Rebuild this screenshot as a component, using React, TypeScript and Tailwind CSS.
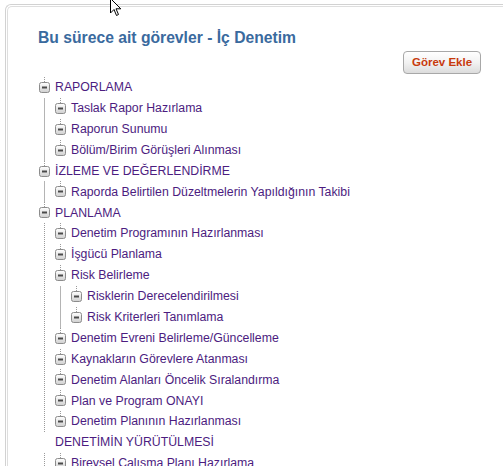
import React from 'react';

type Node = {
  label: string;
  icon?: boolean;
  line?: 'solid' | 'dotted';
  children?: Node[];
};

const tree: Node[] = [
  {
    label: 'RAPORLAMA',
    line: 'solid',
    children: [
      { label: 'Taslak Rapor Hazırlama' },
      { label: 'Raporun Sunumu' },
      { label: 'Bölüm/Birim Görüşleri Alınması' },
    ],
  },
  {
    label: 'İZLEME VE DEĞERLENDİRME',
    line: 'solid',
    children: [{ label: 'Raporda Belirtilen Düzeltmelerin Yapıldığının Takibi' }],
  },
  {
    label: 'PLANLAMA',
    line: 'dotted',
    children: [
      { label: 'Denetim Programının Hazırlanması' },
      { label: 'İşgücü Planlama' },
      {
        label: 'Risk Belirleme',
        line: 'solid',
        children: [
          { label: 'Risklerin Derecelendirilmesi' },
          { label: 'Risk Kriterleri Tanımlama' },
        ],
      },
      { label: 'Denetim Evreni Belirleme/Güncelleme' },
      { label: 'Kaynakların Görevlere Atanması' },
      { label: 'Denetim Alanları Öncelik Sıralandırma' },
      { label: 'Plan ve Program ONAYI' },
      { label: 'Denetim Planının Hazırlanması' },
    ],
  },
  {
    label: 'DENETİMİN YÜRÜTÜLMESİ',
    icon: false,
    line: 'dotted',
    children: [{ label: 'Bireysel Çalışma Planı Hazırlama' }],
  },
];

const MinusIcon = () => (
  <svg width="11" height="11" viewBox="0 0 11 11">
    <defs>
      <linearGradient id="mg" x1="0" y1="0" x2="0" y2="1">
        <stop offset="0" stopColor="#ffffff" />
        <stop offset="1" stopColor="#cfcfcf" />
      </linearGradient>
    </defs>
    <rect x="0.5" y="0.5" width="10" height="10" rx="2" fill="url(#mg)" stroke="#8c8c8c" />
    <rect x="3" y="4.5" width="5" height="2" fill="#4a4a4a" />
  </svg>
);

const TreeNode = ({ node }: { node: Node }) => {
  const hasIcon = node.icon !== false;
  return (
    <li>
      <div className="flex h-[20.9px] items-stretch">
        {hasIcon ? (
          <div className="flex w-[11px] flex-col items-center">
            <div className="h-[5px] w-0 border-l border-dotted border-[#9a9a9a]" />
            <MinusIcon />
          </div>
        ) : (
          <div className="w-[11px]" />
        )}
        <span className="ml-[5px] flex items-center whitespace-nowrap text-[12.3px] text-[#4c1c80]">
          {node.label}
        </span>
      </div>
      {node.children && (
        <ul
          className={
            'ml-[5px] border-l pl-[10px] ' +
            (node.line === 'dotted' ? 'border-dotted border-[#9a9a9a]' : 'border-solid border-[#b4b4b4]')
          }
        >
          {node.children.map((c) => (
            <TreeNode key={c.label} node={c} />
          ))}
        </ul>
      )}
    </li>
  );
};

export default function App() {
  return (
    <div
      className="relative h-[466px] w-[503px] overflow-hidden bg-white"
      style={{ fontFamily: '"Liberation Sans", Arial, sans-serif' }}
    >
      <div className="ml-[5px] mt-[4px] h-[470px] rounded-tl-[6px] border-l border-t border-[#d2d2d2] pl-[1px] pt-[1px]">
        <div className="h-full rounded-tl-[5px] border-l border-t border-[#dedede] pl-[30px] pt-[21px]">
          <h1 className="text-[15.7px] font-bold leading-[20px] text-[#3a6a9e]">
            Bu sürece ait görevler - İç Denetim
          </h1>

          <div className="mt-[3px] flex justify-end pr-[22px]">
            <button className="h-[23px] w-[78px] rounded-[4px] border border-[#a8a8a8] bg-gradient-to-b from-[#ffffff] via-[#f2f2f2] to-[#dcdcdc] text-[11.5px] font-bold text-[#c73a0c]">
              Görev Ekle
            </button>
          </div>

          <ul className="mt-[3px] pl-[1px]">
            {tree.map((n) => (
              <TreeNode key={n.label} node={n} />
            ))}
          </ul>
        </div>
      </div>

      <svg className="absolute left-[110px] top-[-2px]" width="13" height="19" viewBox="0 0 13 19">
        <path d="M0.5 0.5 L0.5 15 L4 11.5 L6.5 17.5 L8.5 16.5 L6 10.8 L10.8 10.8 Z" fill="#fff" stroke="#000" strokeWidth="1" strokeLinejoin="miter" />
      </svg>
    </div>
  );
}
